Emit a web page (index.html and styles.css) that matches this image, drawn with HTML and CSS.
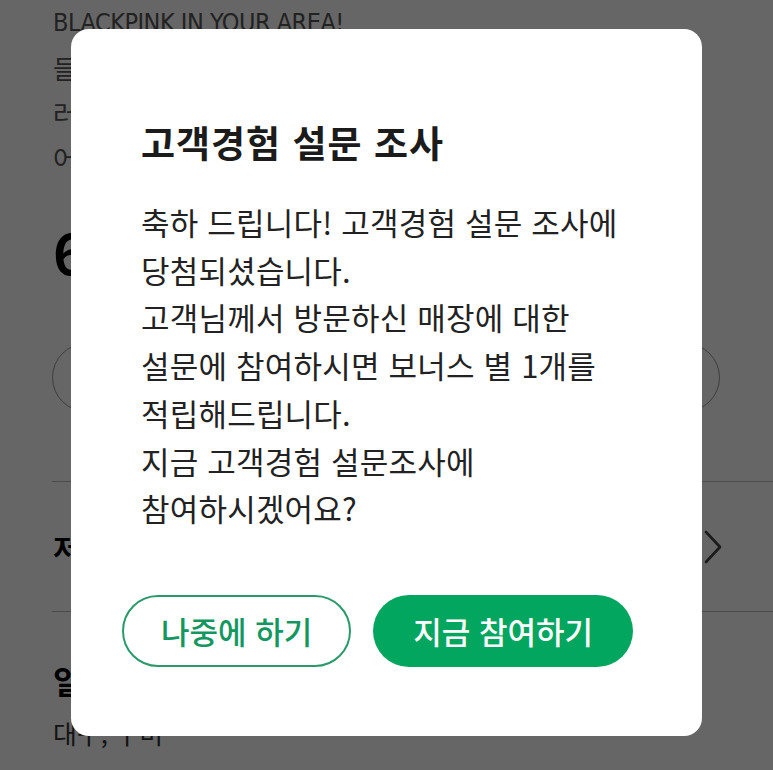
FILE: index.html
```html
<!DOCTYPE html>
<html lang="ko">
<head>
<meta charset="utf-8">
<title>고객경험 설문 조사</title>
<link rel="stylesheet" href="styles.css">
</head>
<body>
<main class="page">
  <div class="promo">
    <span class="promo-line promo-en">BLACKPINK IN YOUR AREA!</span>
    <span class="promo-line">들려오는 블랙핑크의 노래와 함께</span>
    <span class="promo-line">러블리한 핑크 음료를 만나보세요</span>
    <span class="promo-line">어디서든 즐기는 특별한 경험</span>
  </div>
  <div class="price">6,100원</div>
  <div class="pill">수량 선택</div>
  <div class="link-row">
    <span class="link-label">저장된 쿠폰 확인</span>
    <svg class="chevron" width="18" height="34" viewBox="0 0 18 34"><polyline points="2,2 16,17 2,32" fill="none" stroke="#444" stroke-width="2.6" stroke-linecap="round" stroke-linejoin="round"/></svg>
  </div>
  <section class="info">
    <h2 class="info-title">일반 매장 정보</h2>
    <p class="info-text">대구, 구미</p>
  </section>
</main>
<div class="overlay">
  <div class="modal" role="dialog" aria-labelledby="survey-title">
    <h1 class="modal-title" id="survey-title">고객경험 설문 조사</h1>
    <p class="modal-text">축하 드립니다! 고객경험 설문 조사에<br>당첨되셨습니다.<br>고객님께서 방문하신 매장에 대한<br>설문에 참여하시면 보너스 별 1개를<br>적립해드립니다.<br>지금 고객경험 설문조사에<br>참여하시겠어요?</p>
    <div class="actions">
      <button class="btn btn-outline" type="button">나중에 하기</button>
      <button class="btn btn-fill" type="button">지금 참여하기</button>
    </div>
  </div>
</div>
</body>
</html>
```
FILE: styles.css
```css
html, body {
  margin: 0;
  padding: 0;
  background: #fff;
  overflow: hidden;
}
body {
  font-family: "Noto Sans CJK KR", "Noto Sans", sans-serif;
  color: #222;
  width: 773px;
  height: 770px;
}

/* background page */
.page {
  display: flex;
  flex-direction: column;
  padding: 0 0 0 53px;
}
.promo {
  display: flex;
  flex-direction: column;
  font-size: 26px;
  color: #555;
  letter-spacing: -1px;
}
.promo-line {
  display: block;
  height: 45px;
  line-height: 45px;
  white-space: nowrap;
}
.promo-en {
  font-family: "Liberation Sans Narrow", "DejaVu Sans Condensed", "Noto Sans CJK KR", sans-serif;
  font-size: 25px;
  letter-spacing: -0.5px;
}
.price {
  margin-top: 39px;
  font-size: 56px;
  line-height: 64px;
  font-weight: 700;
  color: #000;
}
.pill {
  margin: 60px 53px 0 -1px;
  height: 69px;
  box-sizing: border-box;
  border: 1px solid #999;
  border-radius: 35px;
  display: flex;
  align-items: center;
  justify-content: center;
  font-size: 26px;
  color: #333;
}
.link-row {
  margin: 69px 0 0 -1px;
  height: 131px;
  box-sizing: border-box;
  border-top: 1px solid #bbb;
  border-bottom: 1px solid #bbb;
  display: flex;
  align-items: center;
  justify-content: space-between;
  padding: 0 51px 0 1px;
}
.link-label {
  font-size: 29px;
  font-weight: 700;
  color: #000;
}
.chevron { display: block; }
.info {
  padding-top: 46px;
}
.info-title {
  margin: 0;
  font-size: 32px;
  line-height: 44px;
  font-weight: 700;
  color: #000;
}
.info-text {
  margin: 11px 0 0;
  font-size: 26px;
  line-height: 40px;
  color: #333;
}

/* dialog */
.overlay {
  position: fixed;
  inset: 0;
  background: rgba(0, 0, 0, 0.6);
  display: flex;
  justify-content: center;
  align-items: flex-start;
  padding-top: 29px;
}
.modal {
  width: 631px;
  box-sizing: border-box;
  background: #fff;
  border-radius: 18px;
  padding: 90px 60px 69px 70px;
}
.modal-title {
  margin: 0;
  font-size: 37px;
  line-height: 46px;
  font-weight: 700;
  letter-spacing: 1px;
  color: #1b1b1b;
}
.modal-text {
  margin: 33px 0 0;
  font-size: 31px;
  line-height: 47.7px;
  letter-spacing: 0.2px;
  color: #222;
}
.actions {
  margin: 63px 9px 0 -18px;
  display: flex;
  justify-content: flex-end;
  gap: 22px;
}
.btn {
  flex: none;
  white-space: nowrap;
  height: 72px;
  box-sizing: border-box;
  border-radius: 36px;
  padding: 0 37px;
  font-family: inherit;
  font-size: 31px;
  font-weight: 500;
  line-height: 1;
  cursor: pointer;
}
.btn-outline {
  background: #fff;
  border: 2px solid #2a9a6a;
  color: #14975f;
}
.btn-fill {
  background: #03a65f;
  border: none;
  color: #fff;
  padding: 0 40px;
}
```
